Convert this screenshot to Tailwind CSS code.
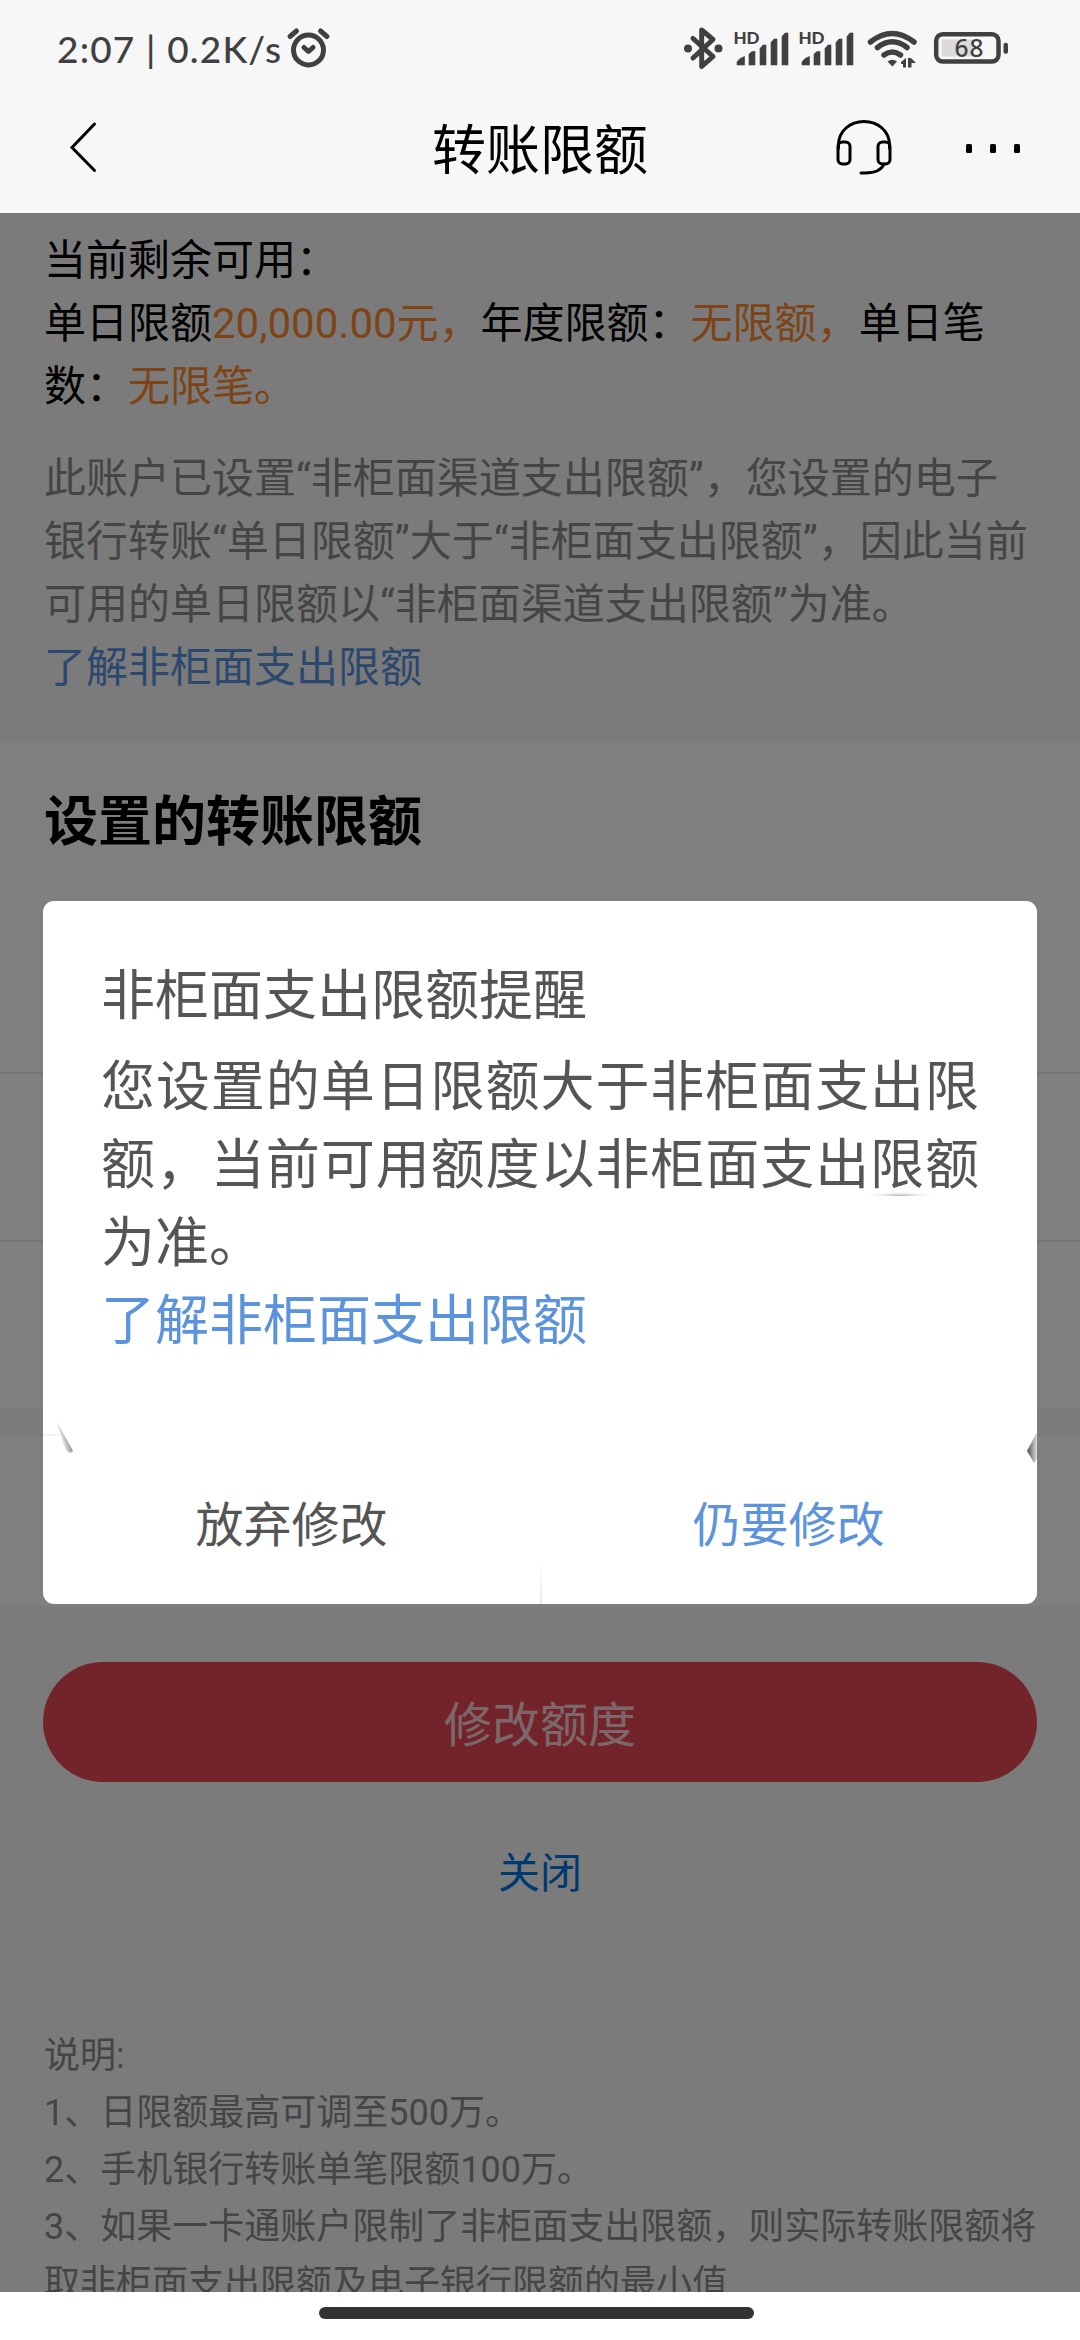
<!DOCTYPE html>
<html lang="zh-CN">
<head>
<meta charset="utf-8">
<title>转账限额</title>
<script src="https://cdn.jsdelivr.net/npm/@tailwindcss/browser@4"></script>
</head>
<body class="w-[1080px] h-[2340px] overflow-hidden bg-white text-black font-[Roboto,'Noto_Sans_CJK_SC',sans-serif]">
<div class="relative flex flex-col h-[2340px]">
  <header class="h-[213px] shrink-0 bg-[#f7f7f7] flex flex-col">
    <!-- status bar -->
    <div class="h-[98px] shrink-0 flex items-center pl-[57px] pr-[71px] text-[#404040]">
      <span class="w-[229px] text-[37px] leading-[48px] font-medium whitespace-nowrap tracking-[1.2px] font-[Lato,sans-serif]">2:07 | 0.2K/s</span>
      <svg class="w-[46px] h-[44px]" viewBox="0 0 46 44" fill="none" stroke="currentColor" stroke-width="5" stroke-linecap="round" stroke-linejoin="round">
        <circle cx="22.500" cy="23" r="15"/><path d="M4 9.500L10.500 4M41 9.500L34.500 4M18 20.500L22.500 24.500L27 20.500"/>
      </svg>
      <div class="ml-auto flex items-center">
        <svg class="w-[326px] h-[48px]" viewBox="0 0 326 48" fill="none" stroke="currentColor">
          <path stroke-width="5" stroke-linecap="round" stroke-linejoin="round" d="M10 13.500L30 31.500L18.700 41.500V5L30 14.500L10 33"/>
          <g fill="currentColor" stroke="none">
            <circle cx="5" cy="23.500" r="4"/><circle cx="35.500" cy="23.500" r="4"/>
            <text x="50.500" y="19" font-family="Lato" font-weight="900" font-size="17" textLength="26">HD</text>
            <path id="bars" d="M54 40V37Q56 33 61.500 31.500V40ZM66 40V29L69 26.500H72V40ZM77 40V23.500L80 20H83V40ZM88 40V17.500L91 14H94V40ZM99 40V11.500L102 8H105V40Z" stroke="currentColor" stroke-width="0.600" stroke-linejoin="round"/>
            <text x="115.500" y="19" font-family="Lato" font-weight="900" font-size="17" textLength="26">HD</text>
            <use href="#bars" x="65"/>
            <path d="M204.500 36.500Q209.300 33 214 36.500L209.300 41.500Z"/>
            <path d="M218 37L223 33V42.500H220V39H218ZM225 33H228L233 38H228.500V42.500H225Z"/>
          </g>
          <path stroke-width="5.500" stroke-linecap="round" d="M187.500 17Q209 0 231 17M194.500 22.500Q209.300 11 224 22.500M201 30Q209.300 24 217.500 30"/>
          <rect x="253.200" y="9.300" width="62.300" height="27.200" rx="6.500" stroke-width="4.500"/>
          <rect x="258.500" y="14.500" width="32" height="17" rx="2" fill="#dadada" stroke="none"/>
          <rect x="320.500" y="17.700" width="4.500" height="11" rx="2" fill="currentColor" stroke="none"/>
          <text x="271.500" y="31.500" font-family="Noto Sans" font-size="24.500" font-weight="500" textLength="29" fill="currentColor" stroke="none">68</text>
        </svg>
      </div>
    </div>
    <!-- navigation bar -->
    <nav class="h-[98px] grid grid-cols-3 items-center">
      <svg class="ml-[68px] w-[32px] h-[56px]" viewBox="0 0 32 56" fill="none" stroke="#000" stroke-width="3" stroke-linecap="round"><path d="M26.500 5L4 28.500L26.500 51.500"/></svg>
      <h1 class="pt-[9px] text-center text-[54px] leading-[80px] font-normal whitespace-nowrap">转账限额</h1>
      <div class="flex items-center justify-end gap-[72px] pr-[59px]">
        <svg class="w-[58px] h-[58px]" viewBox="0 0 58 58" fill="none" stroke="#000" stroke-width="3" stroke-linecap="round"><path d="M3.500 30V27C3.500 13 15 3.500 29 3.500S54.500 13 54.500 27V30M26 55H30C39 55 46 53 49 46"/><rect x="3" y="24" width="12" height="22" rx="4.500"/><rect x="43" y="24" width="12" height="22" rx="4.500"/></svg>
        <svg class="mt-[2px] w-[56px] h-[12px]" viewBox="0 0 56 12"><rect x="1" y="2" width="6" height="9" rx="1.500"/><rect x="25" y="2" width="6" height="9" rx="1.500"/><rect x="49" y="2" width="6" height="9" rx="1.500"/></svg>
      </div>
    </nav>
  </header>

  <main class="relative h-[2079px] shrink-0 overflow-hidden bg-[#f7f7f7] flex flex-col">
    <section class="h-[529px] shrink-0 px-[44px] pt-[16px] text-[42px] leading-[63px]">
      <p>当前剩余可用：<br>单日限额<span class="text-[#fb8a2e]">20,000.00元，</span>年度限额：<span class="text-[#fb8a2e]">无限额，</span>单日笔<br>数：<span class="text-[#fb8a2e]">无限笔。</span></p>
      <p class="mt-[29px] whitespace-nowrap text-[#8a8a8a]">此账户已设置“非柜面渠道支出限额”，您设置的电子<br>银行转账“单日限额”大于“非柜面支出限额”，因此当前<br>可用的单日限额以“非柜面渠道支出限额”为准。</p>
      <a class="text-[#5a90dc]">了解非柜面支出限额</a>
    </section>
    <section class="h-[666px] shrink-0 bg-white flex flex-col">
      <h2 class="h-[163px] shrink-0 pl-[44px] pt-[41px] text-[54px] leading-[80px] font-bold">设置的转账限额</h2>
      <div class="h-[169px] shrink-0 border-b-2 border-[#ececec]"></div>
      <div class="h-[168px] shrink-0 border-b-2 border-[#ececec]"></div>
    </section>
    <section class="mt-[29px] h-[169px] shrink-0 bg-white"></section>
    <section class="mt-[56px] px-[43px] flex flex-col items-center">
      <button class="h-[120px] w-full rounded-full bg-[#e64956] text-white/75 text-[48px] leading-[72px] pt-[8px]">修改额度</button>
      <a class="mt-[60px] text-[42px] leading-[63px] text-[#0072e0]">关闭</a>
    </section>
    <section class="mt-[123px] px-[44px] text-[36px] leading-[57px] text-[#8a8a8a] whitespace-nowrap">
      <p>说明:</p><p>1、日限额最高可调至500万。</p><p>2、手机银行转账单笔限额100万。</p><p>3、如果一卡通账户限制了非柜面支出限额，则实际转账限额将<br>取非柜面支出限额及电子银行限额的最小值</p>
    </section>
    <div class="absolute inset-0 bg-black/50"></div>
  </main>

  <footer class="flex-1 bg-white flex justify-center pt-[15px] pr-[7px]"><div class="w-[435px] h-[12px] rounded-full bg-[#333]"></div></footer>

  <!-- dialog -->
  <div class="absolute left-[43px] top-[901px] w-[994px] h-[703px] rounded-[11px] bg-white text-[#555] flex flex-col">
    <div class="h-[583px] px-[58px] pt-[57px] text-[54px] leading-[78px]">
      <h3 class="font-normal mb-[13px]">非柜面支出限额提醒</h3>
      <p class="text-justify">您设置的单日限额大于非柜面支出限额，当前可用额度以非柜面支出限额为准。</p>
      <a class="text-[#5b93dc]">了解非柜面支出限额</a>
    </div>
    <div class="flex flex-1 text-[48px] leading-[72px]">
      <button class="flex-1 pb-[36px]">放弃修改</button>
      <button class="flex-1 pb-[36px] text-[#5b93dc]">仍要修改</button>
    </div>
    <svg class="absolute inset-0 w-[994px] h-[703px]" viewBox="0 0 994 703">
      <defs>
        <linearGradient id="l" x1="1" y1="0.400" x2="0.200" y2="0.900"><stop offset="0.300" stop-color="#888"/><stop offset="0.800" stop-color="#fff"/></linearGradient>
        <linearGradient id="r"><stop offset="0" stop-color="#505050"/><stop offset="1" stop-color="#ddd"/></linearGradient>
        <linearGradient id="v" x1="0" y1="0" x2="0" y2="1"><stop offset="0" stop-color="#fff"/><stop offset="1" stop-color="#e8e8e8"/></linearGradient>
        <radialGradient id="s" cx="0.500" cy="1" r="0.600"><stop offset="0" stop-color="#aaa"/><stop offset="1" stop-color="#fff" stop-opacity="0"/></radialGradient>
      </defs>
      <rect x="497" y="662" width="2" height="41" fill="url(#v)"/>
      <rect x="0" y="533" width="17" height="1.500" fill="#eee"/>
      <path d="M14 521L30 550Q26 555 21 546Z" fill="url(#l)"/>
      <path d="M994 531L984 550L991 562L994 558Z" fill="url(#r)"/>
      <path d="M826 295Q860 279 888 295Z" fill="url(#s)"/>
    </svg>
  </div>
</div>
</body>
</html>
